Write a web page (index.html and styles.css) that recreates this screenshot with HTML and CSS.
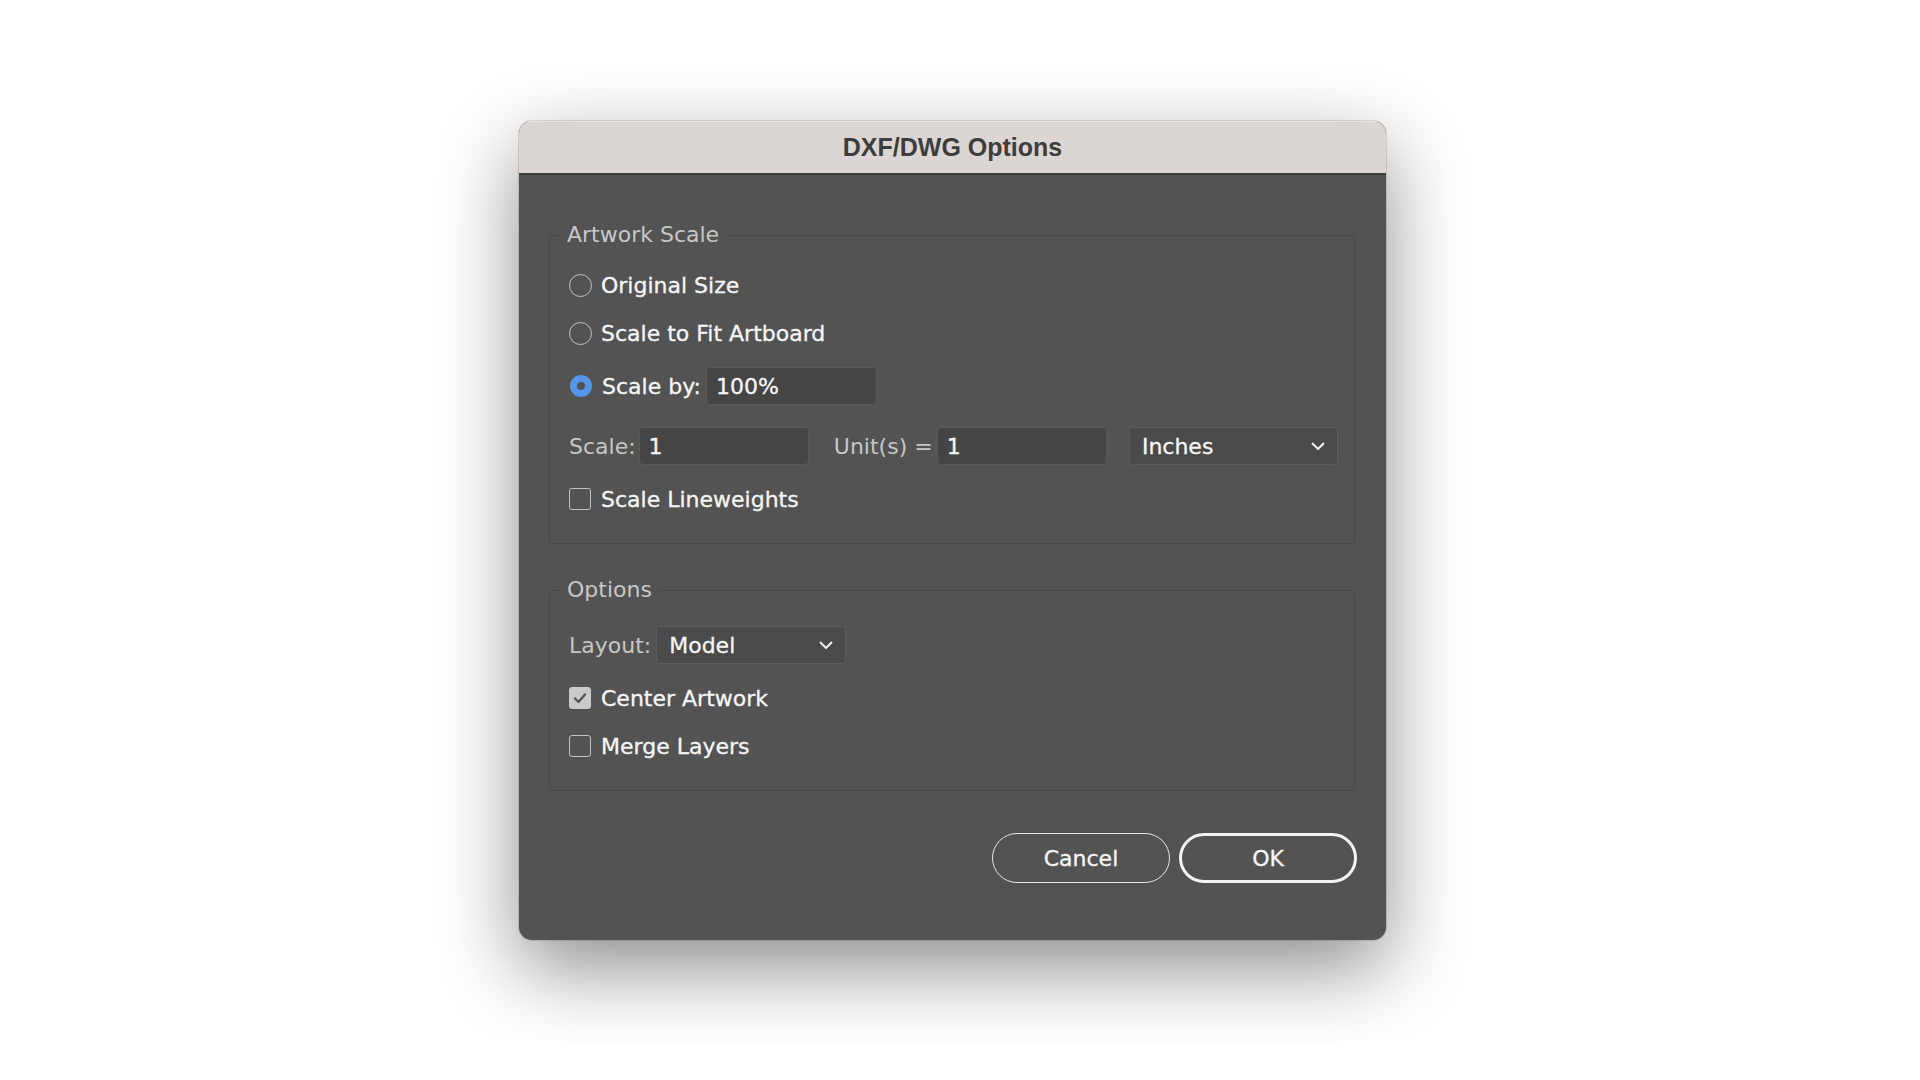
FILE: index.html
```html
<!DOCTYPE html>
<html>
<head>
<meta charset="utf-8">
<link rel="stylesheet" href="styles.css">
</head>
<body>
<div class="clip">
  <div class="dialog">
    <div class="titlebar">DXF/DWG Options</div>
    <div class="body">
      <fieldset class="group group-scale">
        <legend>Artwork Scale</legend>
        <div class="row r1"><span class="radio"></span><span class="lbl">Original Size</span></div>
        <div class="row r2"><span class="radio"></span><span class="lbl">Scale to Fit Artboard</span></div>
        <div class="row r3"><span class="radio on"></span><span class="lbl">Scale by:</span><span class="input w171">100%</span></div>
        <div class="row r4">
          <span class="muted">Scale:</span><span class="input w171 gap8">1</span>
          <span class="muted units">Unit(s) =</span><span class="input w171 gap9">1</span>
          <span class="select sel-inches">Inches<svg class="chev" width="14" height="8" viewBox="0 0 14 8"><path d="M1 1L7 7L13 1" stroke="#f2f2f2" stroke-width="2" fill="none"/></svg></span>
        </div>
        <div class="row r5"><span class="check"></span><span class="lbl">Scale Lineweights</span></div>
      </fieldset>
      <fieldset class="group group-opts">
        <legend>Options</legend>
        <div class="row o1"><span class="muted">Layout:</span><span class="select sel-model">Model<svg class="chev" width="14" height="8" viewBox="0 0 14 8"><path d="M1 1L7 7L13 1" stroke="#f2f2f2" stroke-width="2" fill="none"/></svg></span></div>
        <div class="row o2"><span class="check on"><svg width="22" height="22" viewBox="0 0 22 22"><path d="M6 11.5L9.5 15L16 7.5" stroke="#555" stroke-width="2.4" fill="none" stroke-linecap="round" stroke-linejoin="round"/></svg></span><span class="lbl">Center Artwork</span></div>
        <div class="row o3"><span class="check"></span><span class="lbl">Merge Layers</span></div>
      </fieldset>
      <div class="buttons">
        <button class="btn">Cancel</button>
        <button class="btn primary">OK</button>
      </div>
    </div>
  </div>
</div>
</body>
</html>
```
FILE: styles.css
```css
html, body {
  margin: 0;
  padding: 0;
  background: #ffffff;
}
.clip {
  width: 1920px;
  height: 1042px;
  overflow: hidden;
  box-sizing: border-box;
  padding: 121px 0 0 519px;
}
.dialog {
  width: 867px;
  height: 819px;
  border-radius: 13px;
  background: #535353;
  overflow: hidden;
  box-shadow: 0 28px 80px rgba(0,0,0,0.45), 0 0 0 1px rgba(0,0,0,0.12);
  font-family: "DejaVu Sans", "Noto Sans", sans-serif;
  font-size: 22px;
  color: #f4f4f4;
}
.titlebar {
  height: 52px;
  background: #dbd6d3;
  border-bottom: 2px solid #3e3e3e;
  box-shadow: inset 0 1px 0 #e9e6e4;
  display: flex;
  align-items: center;
  justify-content: center;
  font-family: "Liberation Sans", Arial, sans-serif;
  font-weight: 700;
  font-size: 25px;
  color: #3d3d3d;
}
.body {
  padding: 47px 31px 0 30px;
}
.group {
  margin: 0;
  border: 1px solid #494949;
  border-radius: 4px;
  padding: 19px 16px 26px 19px;
  min-width: 0;
}
.group legend {
  padding: 0 5px;
  margin-left: -7px;
  line-height: 26px;
  font-size: 22px;
  color: #c7c7c7;
}
.group-opts {
  margin-top: 33px;
  padding-top: 23px;
}
.row {
  display: flex;
  align-items: center;
  height: 36px;
}
.r2 { margin-top: 12px; }
.r3 { margin-top: 16px; height: 38px; }
.r4 { margin-top: 22px; height: 38px; }
.r5 { margin-top: 16px; }
.o1 { height: 38px; }
.o2 { margin-top: 16px; }
.o3 { margin-top: 12px; }

.radio {
  width: 21px;
  height: 21px;
  border: 1.5px solid #c2c2c2;
  border-radius: 50%;
  flex: none;
  margin-right: 9px;
}
.radio.on {
  width: 8px;
  height: 8px;
  border: 7.5px solid #5596eb;
  background: #505050;
  margin-left: 1px;
  margin-right: 10px;
}
.check {
  width: 20px;
  height: 20px;
  border: 1.5px solid #c2c2c2;
  border-radius: 3px;
  flex: none;
  margin-right: 10px;
  display: flex;
  align-items: center;
  justify-content: center;
}
.check.on {
  background: #cacaca;
  border-color: #cacaca;
}
.check.on svg { flex: none; }
.lbl {
  color: #f6f6f6;
  white-space: nowrap;
  -webkit-text-stroke: 0.3px #f6f6f6;
}
.muted {
  color: #c6c6c6;
  white-space: nowrap;
}
.input {
  box-sizing: border-box;
  height: 38px;
  background: #454545;
  border: 1px solid #5a5a5a;
  border-radius: 4px;
  display: flex;
  align-items: center;
  padding-left: 9px;
  color: #f6f6f6;
  -webkit-text-stroke: 0.3px #f6f6f6;
}
.w171 { width: 171px; }
.r3 .input { margin-left: 5px; }
.gap8 { margin-left: 3px; }
.gap9 { margin-left: 4px; }
.units { margin-left: 25px; }
.select {
  box-sizing: border-box;
  height: 38px;
  background: #4a4a4a;
  border: 1px solid #5d5d5d;
  border-radius: 4px;
  display: flex;
  align-items: center;
  justify-content: space-between;
  padding: 0 12px 0 12px;
  color: #f6f6f6;
  -webkit-text-stroke: 0.3px #f6f6f6;
}
.sel-inches { width: 210px; margin-left: 22px; }
.sel-model { width: 190px; margin-left: 5px; }
.chev { flex: none; }
.buttons {
  display: flex;
  justify-content: flex-end;
  gap: 9px;
  margin-top: 42px;
  margin-right: -2px;
}
.btn {
  box-sizing: border-box;
  width: 178px;
  height: 50px;
  border-radius: 25px;
  background: transparent;
  border: 1.5px solid #e6e6e6;
  color: #f6f6f6;
  font-family: "DejaVu Sans", "Noto Sans", sans-serif;
  font-size: 22px;
  -webkit-text-stroke: 0.3px #f6f6f6;
  padding: 0;
}
.btn.primary {
  border: 3px solid #f4f4f4;
}
```
